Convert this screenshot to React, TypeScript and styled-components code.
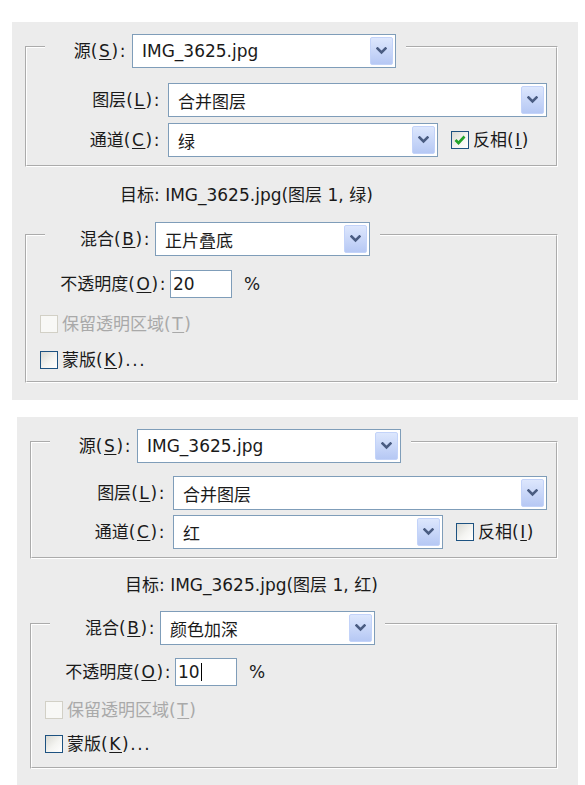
import React from "react";
import styled, { createGlobalStyle } from "styled-components";

const GlobalStyle = createGlobalStyle`
  html, body { margin: 0; padding: 0; background: #ffffff; }
  body {
    font-family: "DejaVu Sans", "Noto Sans CJK SC", sans-serif;
    font-size: 17px;
    color: #1a1a1a;
  }
`;

const Page = styled.main`
  width: 585px;
  height: 785px;
  overflow: hidden;
  box-sizing: border-box;
  padding-top: 22px;
  display: flex;
  flex-direction: column;
  gap: 17px;
`;

const Panel = styled.section<{ $left: number; $width: number; $bottom: number }>`
  flex: none;
  margin-left: ${(p) => p.$left}px;
  width: ${(p) => p.$width}px;
  box-sizing: border-box;
  padding: 4px 20px ${(p) => p.$bottom}px 13px;
  background: #ececec;
  display: flex;
  flex-direction: column;
`;

const Group = styled.fieldset<{ $top: number; $bottom: number; $gap: number }>`
  margin: 0;
  min-width: 0;
  border: 2px groove #ffffff;
  padding: ${(p) => p.$top}px 9px ${(p) => p.$bottom}px 0;
  display: flex;
  flex-direction: column;
  gap: ${(p) => p.$gap}px;
`;

const Legend = styled.legend`
  margin-left: 18px;
  padding: 8px 10px 0 0;
`;

const Row = styled.div<{ $gap?: number; $indent?: number }>`
  display: flex;
  align-items: center;
  gap: ${(p) => p.$gap ?? 8}px;
  padding-left: ${(p) => p.$indent ?? 0}px;
`;

const FieldLabel = styled.label<{ $w: number }>`
  flex: none;
  width: ${(p) => p.$w}px;
  text-align: right;
  white-space: nowrap;
  line-height: 20px;
`;

const Key = styled.span`
  letter-spacing: 1.6px;
`;

const Mn = styled.span`
  text-decoration: underline;
  text-underline-offset: 2px;
`;

const SelectBox = styled.div<{ $w?: number }>`
  ${(p) => (p.$w ? `width: ${p.$w}px; flex: none;` : `flex: 1;`)}
  height: 34px;
  box-sizing: border-box;
  border: 1px solid #7f9db9;
  background: #ffffff;
  display: flex;
  align-items: stretch;
  padding: 2px 2px 2px 9px;
`;

const SelectValue = styled.span`
  flex: 1;
  display: flex;
  align-items: center;
  white-space: nowrap;
  overflow: hidden;
`;

const DropButton = styled.span`
  flex: none;
  width: 23px;
  box-sizing: border-box;
  border: 1px solid #c3d3f9;
  border-radius: 2px;
  background: linear-gradient(#dde7fd, #b6c8f4);
  display: flex;
  align-items: center;
  justify-content: center;
`;

const NumberBox = styled.div`
  flex: none;
  width: 62px;
  height: 28px;
  box-sizing: border-box;
  border: 1px solid #7f9db9;
  background: #ffffff;
  display: flex;
  align-items: center;
  padding-left: 2px;
`;

const Caret = styled.span`
  display: inline-block;
  width: 1px;
  height: 18px;
  margin-left: 1px;
  background: #000000;
`;

const Percent = styled.span`
  margin-left: 9px;
`;

const CheckWrap = styled.span<{ $offset?: number; $disabled?: boolean }>`
  display: inline-flex;
  align-items: center;
  gap: 4px;
  margin-left: ${(p) => p.$offset ?? 0}px;
  color: ${(p) => (p.$disabled ? "#a9a9a9" : "inherit")};
  white-space: nowrap;
  line-height: 20px;
`;

const Box = styled.span<{ $disabled?: boolean }>`
  flex: none;
  width: 18px;
  height: 18px;
  box-sizing: border-box;
  border: 1px solid ${(p) => (p.$disabled ? "#d2d0c6" : "#1d5281")};
  background: ${(p) =>
    p.$disabled ? "#f8f8f6" : "linear-gradient(135deg, #d9d9d3 0%, #f4f4f1 55%, #ffffff 100%)"};
  display: flex;
  align-items: center;
  justify-content: center;
`;

const TargetLine = styled.p<{ $top: number; $bottom: number }>`
  margin: ${(p) => p.$top}px 0 ${(p) => p.$bottom}px 95px;
  line-height: 20px;
  white-space: nowrap;
`;

const Chevron = () => (
  <svg width="11" height="8" viewBox="0 0 11 8" aria-hidden>
    <polyline points="1.5,1.5 5.5,5.5 9.5,1.5" fill="none" stroke="#4a5c82" strokeWidth="2.6" strokeLinecap="square" />
  </svg>
);

const Tick = () => (
  <svg width="12" height="10" viewBox="0 0 12 10" aria-hidden>
    <polyline points="1.5,5 4.5,8 10.5,1.5" fill="none" stroke="#22a32b" strokeWidth="2.6" />
  </svg>
);

function Select({ value, width }: { value: string; width?: number }) {
  return (
    <SelectBox $w={width}>
      <SelectValue>{value}</SelectValue>
      <DropButton>
        <Chevron />
      </DropButton>
    </SelectBox>
  );
}

function Check({
  checked,
  disabled,
  offset,
  children,
}: {
  checked?: boolean;
  disabled?: boolean;
  offset?: number;
  children: React.ReactNode;
}) {
  return (
    <CheckWrap $offset={offset} $disabled={disabled}>
      <Box $disabled={disabled}>{checked && <Tick />}</Box>
      <span>{children}</span>
    </CheckWrap>
  );
}

type Spacing = {
  g1Top: number;
  g1Gap: number;
  targetTop: number;
  targetBottom: number;
  g2Top: number;
  g2Gap: number;
  g2Bottom: number;
  panelBottom: number;
};

type Settings = {
  channel: string;
  inverted: boolean;
  blend: string;
  opacity: string;
  caret: boolean;
  left: number;
  width: number;
  sp: Spacing;
};

const panels: Settings[] = [
  {
    channel: "绿",
    inverted: true,
    blend: "正片叠底",
    opacity: "20",
    caret: false,
    left: 12,
    width: 566,
    sp: { g1Top: 15, g1Gap: 6, targetTop: 18, targetBottom: 9, g2Top: 14, g2Gap: 16, g2Bottom: 11, panelBottom: 17 },
  },
  {
    channel: "红",
    inverted: false,
    blend: "颜色加深",
    opacity: "10",
    caret: true,
    left: 17,
    width: 561,
    sp: { g1Top: 13, g1Gap: 5, targetTop: 16, targetBottom: 8, g2Top: 13, g2Gap: 14, g2Bottom: 13, panelBottom: 24 },
  },
];

function ApplyImagePanel({ s }: { s: Settings }) {
  const sp = s.sp;
  return (
    <Panel $left={s.left} $width={s.width} $bottom={sp.panelBottom}>
      <Group $top={sp.g1Top} $bottom={8} $gap={sp.g1Gap}>
        <Legend>
          <Row $gap={5}>
            <FieldLabel $w={82}>
              源<Key>(<Mn>S</Mn>):</Key>
            </FieldLabel>
            <Select value="IMG_3625.jpg" width={264} />
          </Row>
        </Legend>
        <Row $gap={7}>
          <FieldLabel $w={134}>
            图层<Key>(<Mn>L</Mn>):</Key>
          </FieldLabel>
          <Select value="合并图层" />
        </Row>
        <Row $gap={7}>
          <FieldLabel $w={134}>
            通道<Key>(<Mn>C</Mn>):</Key>
          </FieldLabel>
          <Select value={s.channel} width={270} />
          <Check checked={s.inverted} offset={6}>
            反相<Key>(<Mn>I</Mn>)</Key>
          </Check>
        </Row>
      </Group>
      <TargetLine $top={sp.targetTop} $bottom={sp.targetBottom}>
        目标: IMG_3625.jpg(图层 1, {s.channel})
      </TargetLine>
      <Group $top={sp.g2Top} $bottom={sp.g2Bottom} $gap={sp.g2Gap}>
        <Legend>
          <Row $gap={4}>
            <FieldLabel $w={106}>
              混合<Key>(<Mn>B</Mn>):</Key>
            </FieldLabel>
            <Select value={s.blend} width={215} />
          </Row>
        </Legend>
        <Row $gap={3}>
          <FieldLabel $w={140}>
            不透明度<Key>(<Mn>O</Mn>):</Key>
          </FieldLabel>
          <NumberBox>
            {s.opacity}
            {s.caret && <Caret />}
          </NumberBox>
          <Percent>%</Percent>
        </Row>
        <Row $indent={13}>
          <Check disabled>
            保留透明区域<Key>(<Mn>T</Mn>)</Key>
          </Check>
        </Row>
        <Row $indent={13}>
          <Check>
            蒙版<Key>(<Mn>K</Mn>)...</Key>
          </Check>
        </Row>
      </Group>
    </Panel>
  );
}

export default function App() {
  return (
    <>
      <GlobalStyle />
      <Page>
        {panels.map((s, i) => (
          <ApplyImagePanel key={i} s={s} />
        ))}
      </Page>
    </>
  );
}
